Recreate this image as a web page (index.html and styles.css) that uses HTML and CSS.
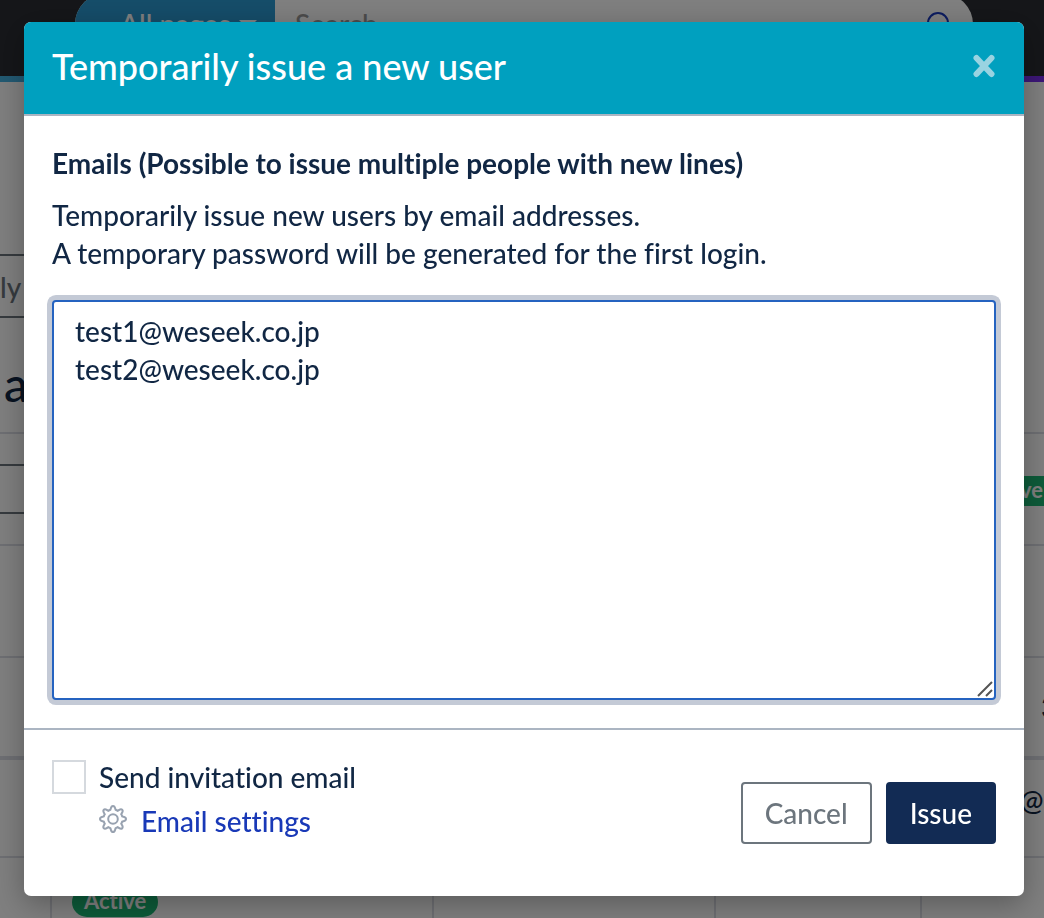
FILE: index.html
```html
<!DOCTYPE html>
<html lang="en">
<head>
<meta charset="utf-8">
<meta name="viewport" content="width=device-width, initial-scale=1">
<title>Temporarily issue a new user</title>
<link rel="stylesheet" href="styles.css">
</head>
<body>
<div class="page" aria-hidden="true">
  <header class="navbar">
    <div class="search">
      <span class="search-scope">All pages <i class="caret"></i></span>
      <span class="search-text">Search</span>
      <svg class="search-icon" viewBox="0 0 32 32"><circle cx="14" cy="13" r="10"/><path d="M21 20l8 9"/></svg>
    </div>
  </header>
  <div class="content">
    <div class="reply-box">ly</div>
    <div class="heading">a</div>
    <table class="users">
      <colgroup><col class="c-num"><col class="c-status"><col class="c-id"><col class="c-name"><col></colgroup>
      <tbody>
        <tr class="row-filter"><td><div class="filter-box"></div></td><td></td><td></td><td></td><td><span class="tag">ve</span></td></tr>
        <tr class="row-tall"><td></td><td></td><td></td><td></td><td></td></tr>
        <tr class="row-head"><td></td><td></td><td></td><td></td><td><span class="date">3</span></td></tr>
        <tr class="row-user"><td></td><td></td><td></td><td></td><td><span class="mail">@a</span></td></tr>
        <tr class="row-user"><td></td><td><span class="badge">Active</span></td><td></td><td></td><td></td></tr>
      </tbody>
    </table>
  </div>
</div>
<div class="backdrop">
  <form class="modal" role="dialog" aria-labelledby="modal-title">
    <header class="modal-header">
      <h1 class="modal-title" id="modal-title">Temporarily issue a new user</h1>
      <button class="close" type="button" aria-label="Close"><svg viewBox="0 0 24 24"><path d="M4.500 4l15 16M19.500 4l-15 16"/></svg></button>
    </header>
    <div class="modal-body">
      <label class="field-label" for="emails">Emails (Possible to issue multiple people with new lines)</label>
      <p class="help">Temporarily issue new users by email addresses.<br>A temporary password will be generated for the first login.</p>
      <div class="field">
        <textarea class="emails" id="emails">test1@weseek.co.jp
test2@weseek.co.jp</textarea>
        <svg class="grip" viewBox="0 0 16 16"><path d="M1 15L15 1M9 15l6-6"/></svg>
      </div>
    </div>
    <footer class="modal-footer">
      <div class="options">
        <input class="check" type="checkbox" id="send">
        <label class="check-label" for="send">Send invitation email</label>
        <a class="settings" href="#settings">
          <svg class="gear" viewBox="0 0 28 28"><path d="M11.4 4.8C12 3.5 11.8 1 14 1s2 2.500 2.600 3.800q1.200.4 2.100 1C20 5.300 21.600 3.300 23.200 4.800s-.5 3.200-1 4.500q.6.9 1 2.100C24.500 12 27 11.800 27 14s-2.500 2-3.800 2.600q-.4 1.200-1 2.100c.5 1.300 2.500 2.900 1 4.500s-3.200-.5-4.500-1q-.9.6-2.100 1C16 24.500 16.200 27 14 27s-2-2.500-2.600-3.800q-1.200-.4-2.100-1c-1.300.5-2.900 2.500-4.500 1s.5-3.200 1-4.500q-.6-.9-1-2.100C3.500 16 1 16.200 1 14s2.500-2 3.800-2.600q.4-1.200 1-2.100c-.5-1.300-2.500-2.900-1-4.500s3.200.5 4.500 1q.9-.6 2.100-1z"/><circle cx="14" cy="14" r="4.800"/></svg>
          Email settings
        </a>
      </div>
      <div class="actions">
        <button class="btn btn-outline" type="button">Cancel</button>
        <button class="btn btn-primary" type="submit">Issue</button>
      </div>
    </footer>
  </form>
</div>
</body>
</html>
```
FILE: styles.css
```css
* { box-sizing: border-box; }
body {
  margin: 0;
  font-family: Lato, "Liberation Sans", sans-serif;
  font-size: 28px;
  font-weight: 500;
  font-variant-ligatures: no-common-ligatures;
  line-height: 38px;
  color: #112744;
  height: 100vh;
  overflow: hidden;
}
.page { height: 100vh; overflow: hidden; background: #fff; }
.navbar {
  display: flex;
  align-items: flex-start;
  height: 82px;
  padding: 0 71px 0 75px;
  background: #2b2d33;
  border-bottom: 6px solid;
  border-image: linear-gradient(90deg, #45b5e5, #7a2df0) 1;
}
.search {
  flex: 1;
  display: flex;
  align-items: center;
  height: 60px;
  margin-top: -6px;
  overflow: hidden;
  background: #fff;
  border-radius: 30px;
}
.search-scope {
  display: flex;
  align-items: center;
  gap: 8px;
  width: 200px;
  height: 100%;
  padding-left: 45px;
  background: #2b9ad3;
  color: #fff;
}
.caret { border: 9px solid transparent; border-top-color: #fff; border-bottom: 0; }
.search-text { flex: 1; padding-left: 20px; color: #999; }
.search-icon { width: 32px; height: 32px; margin: 4px 17px 0 0; fill: none; stroke: #1a3ac0; stroke-width: 2; }
.content { padding-top: 172px; }
.reply-box {
  width: 40%;
  height: 64px;
  padding: 12px 0 0;
  border: solid #6c757d;
  border-width: 2px 0;
  color: #6c757d;
}
.heading { height: 114px; padding: 36px 0 0 4px; font-size: 48px; line-height: 60px; }
.users { width: 100%; table-layout: fixed; border-collapse: separate; border-spacing: 0; }
.c-num { width: 52px; }
.c-status { width: 382px; }
.c-id { width: 282px; }
.c-name { width: 206px; }
.users td {
  padding: 0;
  border-top: 2px solid #dcdee6;
  border-right: 2px solid #dcdee6;
  vertical-align: middle;
  white-space: nowrap;
}
.users td:last-child { border-right: 0; }
.row-filter td, .row-tall td { height: 112px; }
.row-filter td:last-child { padding-top: 4px; }
.row-head td { height: 100px; }
.users .row-user td { height: 98px; padding-bottom: 16px; }
.row-user:nth-child(4) td { height: 100px; border-top-width: 4px; }
.filter-box { height: 50px; border: solid #6c757d; border-width: 2px 0; }
.tag {
  display: block;
  height: 30px;
  padding-left: 98px;
  background: #1bb774;
  color: #fff;
  font-size: 22px;
  font-weight: 700;
  line-height: 28px;
}
.date { padding-left: 119px; }
.mail { padding-left: 98px; }
.badge {
  display: inline-block;
  height: 30px;
  margin: 0 20px;
  padding: 0 12px;
  border-radius: 15px;
  background: #1bb774;
  color: #fff;
  font-size: 22px;
  font-weight: 700;
  line-height: 28px;
}
.backdrop { position: fixed; inset: 0; padding: 22px 20px 22px 24px; background: rgba(0, 0, 0, .5); }
.modal {
  display: flex;
  flex-direction: column;
  height: 100%;
  overflow: hidden;
  background: #fff;
  border-radius: 7px;
  box-shadow: 0 8px 30px rgba(0, 0, 0, .3);
}
.modal-header {
  display: flex;
  align-items: center;
  justify-content: space-between;
  height: 94px;
  padding: 0 28px 4px;
  background: #00a0bf;
  border-bottom: 2px solid #abb5c2;
}
.modal-title { margin: 0; color: #fff; font-size: 36px; font-weight: 500; line-height: 52px; }
.close { display: flex; padding: 0; border: 0; background: none; }
.close svg { width: 24px; height: 24px; fill: none; stroke: #99d3e1; stroke-width: 6; stroke-linecap: round; }
.modal-body { flex: 1; display: flex; flex-direction: column; padding: 28px; }
.field-label { margin-bottom: 14px; font-weight: 700; }
.help { margin: 0 0 28px; }
.field { position: relative; flex: 1; display: flex; }
.emails {
  flex: 1;
  margin: 0;
  padding: 10px 21px;
  border: 2px solid #2563c0;
  border-radius: 4px;
  outline: 0;
  box-shadow: 0 0 0 5px #c4cad6;
  background: #fff;
  color: #112744;
  font: inherit;
  resize: none;
}
.grip { position: absolute; right: 3px; bottom: 3px; width: 16px; height: 16px; fill: none; stroke: #555; stroke-width: 2; }
.modal-footer {
  display: flex;
  align-items: center;
  justify-content: space-between;
  height: 168px;
  padding: 0 28px;
  border-top: 2px solid #abb5c2;
}
.options { display: grid; grid-template-columns: 34px auto; gap: 6px 13px; margin-bottom: 28px; align-items: center; }
.check { appearance: none; width: 34px; height: 34px; margin: 0; border: 2px solid #d5d9de; background: #fff; }
.settings { grid-column: 2; display: flex; align-items: center; gap: 14px; color: #1939b7; text-decoration: none; }
.gear { width: 28px; height: 28px; margin-bottom: 4px; fill: none; stroke: #98a2b0; stroke-width: 2; }
.actions { display: flex; gap: 14px; }
.btn { height: 62px; padding: 0 22px; border: 2px solid; border-radius: 4px; font: inherit; }
.btn-outline { border-color: #6c757d; background: #fff; color: #6c757d; }
.btn-primary { border-color: #122b54; background: #122b54; color: #fff; }
```
